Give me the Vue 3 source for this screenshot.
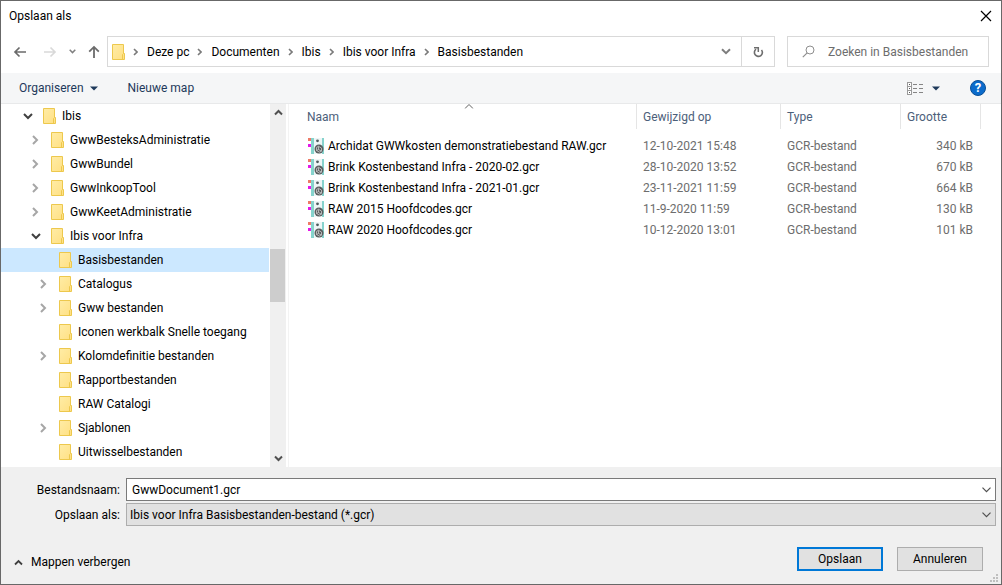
<script setup>
import { ref } from 'vue'

const crumbs = ['Deze pc', 'Documenten', 'Ibis', 'Ibis voor Infra', 'Basisbestanden']

const folders = [
  { name: 'Ibis', level: 0, state: 'open' },
  { name: 'GwwBesteksAdministratie', level: 1, state: 'closed' },
  { name: 'GwwBundel', level: 1, state: 'closed' },
  { name: 'GwwInkoopTool', level: 1, state: 'closed' },
  { name: 'GwwKeetAdministratie', level: 1, state: 'closed' },
  { name: 'Ibis voor Infra', level: 1, state: 'open' },
  { name: 'Basisbestanden', level: 2, state: 'leaf' },
  { name: 'Catalogus', level: 2, state: 'closed' },
  { name: 'Gww bestanden', level: 2, state: 'closed' },
  { name: 'Iconen werkbalk Snelle toegang', level: 2, state: 'leaf' },
  { name: 'Kolomdefinitie bestanden', level: 2, state: 'closed' },
  { name: 'Rapportbestanden', level: 2, state: 'leaf' },
  { name: 'RAW Catalogi', level: 2, state: 'leaf' },
  { name: 'Sjablonen', level: 2, state: 'closed' },
  { name: 'Uitwisselbestanden', level: 2, state: 'leaf' }
]
const selected = ref('Basisbestanden')

const files = [
  { name: 'Archidat GWWkosten demonstratiebestand RAW.gcr', date: '12-10-2021 15:48', size: '340 kB' },
  { name: 'Brink Kostenbestand Infra - 2020-02.gcr', date: '28-10-2020 13:52', size: '670 kB' },
  { name: 'Brink Kostenbestand Infra - 2021-01.gcr', date: '23-11-2021 11:59', size: '664 kB' },
  { name: 'RAW 2015 Hoofdcodes.gcr', date: '11-9-2020 11:59', size: '130 kB' },
  { name: 'RAW 2020 Hoofdcodes.gcr', date: '10-12-2020 13:01', size: '101 kB' }
]

const fileName = ref('GwwDocument1.gcr')
const search = ref('')
</script>

<template>
  <main class="dialog">
    <svg class="defs" width="0" height="0" aria-hidden="true">
      <linearGradient id="folder-fill" x1="0" y1="0" x2="1" y2="1">
        <stop offset="0" stop-color="#ffeca6" />
        <stop offset="1" stop-color="#ffe083" />
      </linearGradient>
      <symbol id="folder" viewBox="0 0 13 16">
        <path d="M.5 .5h11v9h1v6h-12z" fill="url(#folder-fill)" stroke="#edc84d" />
        <path d="M10.500 15.500v-5l1-1" fill="none" stroke="#edc84d" />
      </symbol>
    </svg>

    <header class="titlebar">
      <h1>Opslaan als</h1>
      <button class="close" aria-label="Sluiten">
        <svg width="12" height="12" viewBox="0 0 12 12"><path d="M1 1l10 10M11 1L1 11" stroke="#000" stroke-width="1.200" /></svg>
      </button>
    </header>

    <nav class="navbar" aria-label="Navigatie">
      <div class="history">
        <button aria-label="Vorige"><svg width="14" height="12" viewBox="0 0 14 12"><path d="M13 6H2M6.500 1.500L2 6l4.500 4.500" fill="none" stroke="#6b6b6b" stroke-width="1.700" /></svg></button>
        <button aria-label="Volgende"><svg width="14" height="12" viewBox="0 0 14 12"><path d="M1 6h11M7.500 1.500L12 6l-4.500 4.500" fill="none" stroke="#d9d9d9" stroke-width="1.700" /></svg></button>
        <button class="recent" aria-label="Recente locaties"><svg width="7" height="5" viewBox="0 0 7 5"><path d="M.7 .8l2.800 2.800L6.300 .8" fill="none" stroke="#808080" stroke-width="1.500" /></svg></button>
        <button class="up" aria-label="Omhoog"><svg width="12" height="14" viewBox="0 0 12 14"><path d="M6 13V2M1.200 6.700L6 1.900l4.800 4.800" fill="none" stroke="#6b6b6b" stroke-width="1.800" /></svg></button>
      </div>
      <div class="address">
        <svg class="folder" width="13" height="16"><use href="#folder" /></svg>
        <template v-for="crumb in crumbs" :key="crumb">
          <svg class="sep" width="5" height="8" viewBox="0 0 5 8"><path d="M1 1l3 3-3 3" fill="none" stroke="#7a7a7a" stroke-width="1.600" /></svg>
          <button class="crumb">{{ crumb }}</button>
        </template>
        <button class="history-drop" aria-label="Vorige locaties"><svg width="10" height="7" viewBox="0 0 10 7"><path d="M1 1.200l4 4 4-4" fill="none" stroke="#7d7d7d" stroke-width="2" /></svg></button>
        <button class="refresh" aria-label="Vernieuwen">
          <svg width="11" height="12" viewBox="0 0 11 12"><path d="M3 3.200A4 4 0 1 0 8.500 3.900" fill="none" stroke="#6e6e6e" stroke-width="1.600" /><path d="M1 1.700h4.300V6" fill="none" stroke="#6e6e6e" stroke-width="1.500" /></svg>
        </button>
      </div>
      <label class="search">
        <svg width="13" height="13" viewBox="0 0 13 13"><circle cx="8" cy="5" r="4" fill="none" stroke="#8e8e8e" /><path d="M5.200 7.800L.8 12.200" stroke="#8e8e8e" stroke-width="1.200" /></svg>
        <input v-model="search" type="text" placeholder="Zoeken in Basisbestanden" aria-label="Zoeken in Basisbestanden">
      </label>
    </nav>

    <div class="toolbar">
      <button>Organiseren <svg width="8" height="5" viewBox="0 0 8 5"><path d="M0 .5h8L4 4.500z" fill="#1e395b" /></svg></button>
      <button class="new">Nieuwe map</button>
      <button class="view" aria-label="Weergave wijzigen">
        <svg width="16" height="13" viewBox="0 0 16 13" shape-rendering="crispEdges">
          <path d="M.5 .5h4v12h-4zM.5 4.500h4M.5 8.500h4" fill="#fff" stroke="#9a9a9a" />
          <path d="M2 2h1v1H2zM2 6h1v1H2zM2 10h1v1H2z" fill="#555" />
          <path d="M6 2.500h4M12 2.500h4M6 6.500h4M12 6.500h4M6 10.500h4M12 10.500h4" stroke="#858585" />
        </svg>
        <svg width="8" height="5" viewBox="0 0 8 5"><path d="M0 .5h8L4 4.500z" fill="#1e395b" /></svg>
      </button>
      <button class="help" aria-label="Help">?</button>
    </div>

    <section class="browser">
      <ul class="tree" aria-label="Mappen">
        <li v-for="folder in folders" :key="folder.name">
          <button :class="['node', 'level-' + folder.level, { selected: folder.name === selected }]" @click="selected = folder.name">
            <span class="twisty">
              <svg v-if="folder.state === 'open'" width="10" height="7" viewBox="0 0 10 7"><path d="M1 1l4 4 4-4" fill="none" stroke="#404040" stroke-width="2" /></svg>
              <svg v-else-if="folder.state === 'closed'" width="7" height="10" viewBox="0 0 7 10"><path d="M1 1l4 4-4 4" fill="none" stroke="#a6a6a6" stroke-width="2" /></svg>
            </span>
            <svg class="folder" width="13" height="16"><use href="#folder" /></svg>
            <span>{{ folder.name }}</span>
          </button>
        </li>
      </ul>
      <div class="scrollbar">
        <button aria-label="Omhoog schuiven"><svg width="9" height="7" viewBox="0 0 9 7"><path d="M1 5.500L4.500 2 8 5.500" fill="none" stroke="#505050" stroke-width="2" /></svg></button>
        <div class="track"><div class="thumb"></div></div>
        <button aria-label="Omlaag schuiven"><svg width="9" height="7" viewBox="0 0 9 7"><path d="M1 1.500L4.500 5 8 1.500" fill="none" stroke="#505050" stroke-width="2" /></svg></button>
      </div>
      <div class="files">
        <table>
          <colgroup><col><col class="c-date"><col class="c-type"><col class="c-size"></colgroup>
          <thead>
            <tr>
              <th scope="col" aria-sort="ascending">Naam<svg class="sort" width="9" height="5" viewBox="0 0 9 5"><path d="M.5 4.500l4-4 4 4" fill="none" stroke="#606060" /></svg></th>
              <th scope="col">Gewijzigd op</th>
              <th scope="col">Type</th>
              <th scope="col">Grootte</th>
            </tr>
          </thead>
          <tbody>
            <tr v-for="file in files" :key="file.name">
              <td>
                <div class="file">
                  <svg width="16" height="16" viewBox="0 0 16 16">
                    <path d="M3 0h3v16H3zM14 0h2v16h-2z" fill="#86d3cd" />
                    <path d="M6 0h8v16H6z" fill="#eef6f6" />
                    <path d="M0 0h3v3H0z" fill="#ee7b68" />
                    <path d="M0 6h3v3H0z" fill="#e516e8" />
                    <circle cx="9.500" cy="2.800" r="1.400" fill="#4c5a5c" />
                    <circle cx="11" cy="11" r="4.500" fill="#5a5d5e" />
                    <path d="M8.500 9.500l2-1.200 3 1.800v3l-2 1-3-1.600zM10.500 8.500v3l3 1.600M8.500 12.500l2-1" fill="none" stroke="#c9cccc" stroke-width=".8" />
                  </svg>
                  <span>{{ file.name }}</span>
                </div>
              </td>
              <td>{{ file.date }}</td>
              <td>GCR-bestand</td>
              <td class="size">{{ file.size }}</td>
            </tr>
          </tbody>
        </table>
      </div>
    </section>

    <form class="footer" @submit.prevent>
      <div class="fields">
        <label for="name">Bestandsnaam:</label>
        <div class="combo editable">
          <input id="name" v-model="fileName" type="text">
          <svg class="drop" width="9" height="6" viewBox="0 0 9 6"><path d="M.5 .7l4 4 4-4" fill="none" stroke="#505050" stroke-width="1.200" /></svg>
        </div>
        <label for="type">Opslaan als:</label>
        <div class="combo">
          <select id="type">
            <option>Ibis voor Infra Basisbestanden-bestand (*.gcr)</option>
          </select>
          <svg class="drop" width="9" height="6" viewBox="0 0 9 6"><path d="M.5 .7l4 4 4-4" fill="none" stroke="#505050" stroke-width="1.200" /></svg>
        </div>
      </div>
      <div class="actions">
        <button type="button" class="toggle">
          <svg width="9" height="7" viewBox="0 0 9 7"><path d="M1 5.500L4.500 2 8 5.500" fill="none" stroke="#404040" stroke-width="1.800" /></svg>
          Mappen verbergen
        </button>
        <button type="submit" class="push primary">Opslaan</button>
        <button type="button" class="push">Annuleren</button>
      </div>
      <svg class="grip" width="8" height="8" viewBox="0 0 8 8" shape-rendering="crispEdges"><path d="M6 0h2v2H6zM3 3h2v2H3zM6 3h2v2H6zM0 6h2v2H0zM3 6h2v2H3zM6 6h2v2H6z" fill="#bfbfbf" /></svg>
    </form>
  </main>
</template>

<style>
body {
  margin: 0;
}
</style>

<style scoped>
.dialog {
  box-sizing: border-box;
  display: flex;
  flex-direction: column;
  min-height: 100vh;
  border: 1px solid #686868;
  background: #fff;
  color: #000;
  font: 12px/16px Roboto, "Open Sans", sans-serif;
}
.defs {
  position: absolute;
}
svg {
  display: block;
  flex: none;
}
button,
input,
select {
  margin: 0;
  padding: 0;
  border: 0;
  background: none;
  color: inherit;
  font: inherit;
}
button {
  display: flex;
  align-items: center;
  white-space: nowrap;
}
.titlebar {
  display: flex;
  align-items: center;
  justify-content: space-between;
  height: 29px;
  padding: 0 9px 0 8px;
}
h1 {
  margin: 0;
  font-size: 12px;
  font-weight: 400;
}
.navbar {
  display: flex;
  gap: 12px;
  padding: 6px 12px;
}
.history {
  display: flex;
  align-items: center;
  width: 82px;
}
.history button + button {
  margin-left: 16px;
}
.history .recent.recent {
  margin-left: 12px;
}
.history .up.up {
  margin-left: 12px;
}
.address {
  box-sizing: border-box;
  display: flex;
  flex: 1;
  align-items: center;
  height: 31px;
  padding-left: 4px;
  border: 1px solid #d9d9d9;
}
.sep {
  margin: 0 9px 0 8px;
}
.history-drop {
  margin: 0 10px 0 auto;
}
.refresh {
  justify-content: center;
  align-self: stretch;
  width: 33px;
  border-left: 1px solid #d9d9d9;
}
.search {
  box-sizing: border-box;
  display: flex;
  align-items: center;
  gap: 13px;
  width: 202px;
  padding: 0 14px;
  border: 1px solid #d9d9d9;
}
.search input {
  flex: 1;
  min-width: 0;
}
.search input::placeholder {
  color: #6d6d6d;
  opacity: 1;
}
.toolbar {
  display: flex;
  align-items: center;
  height: 30px;
  padding: 0 15px 0 18px;
  border-bottom: 1px solid #e8e9ea;
  background: #f5f6f7;
  color: #1e395b;
}
.toolbar button {
  gap: 6px;
}
.toolbar .new {
  margin-left: 30px;
}
.toolbar .view {
  gap: 9px;
  margin: 0 30px 0 auto;
}
.toolbar .help {
  justify-content: center;
  width: 16px;
  height: 16px;
  border: 1px solid #0a4f96;
  border-radius: 50%;
  background: #0b6bcb;
  color: #fff;
  font-size: 13px;
  font-weight: 700;
}
.browser {
  display: flex;
  flex: 1;
}
.tree {
  width: 268px;
  margin: 0;
  padding: 0 0 3px;
  list-style: none;
}
.node {
  width: 100%;
  height: 24px;
}
.level-0 {
  padding-left: 21px;
}
.level-1 {
  padding-left: 29px;
}
.level-2 {
  padding-left: 37px;
}
.selected {
  background: #cce8ff;
}
.twisty {
  display: flex;
  justify-content: center;
  width: 11px;
  margin-right: 10px;
}
.node .folder {
  margin-right: 6px;
}
.scrollbar {
  display: flex;
  flex-direction: column;
  width: 16px;
  margin: 0 2px 0 1px;
  background: #f0f0f0;
}
.scrollbar button {
  justify-content: center;
  height: 17px;
}
.track {
  display: flex;
  flex: 1;
  flex-direction: column;
}
.thumb {
  width: 15px;
  height: 16%;
  margin-top: 128px;
  background: #cdcdcd;
}
.files {
  flex: 1;
  padding: 0 20px 0 12px;
  border-left: 1px solid #f3f3f3;
}
table {
  width: 100%;
  table-layout: fixed;
  border-collapse: separate;
  border-spacing: 0;
}
.c-date {
  width: 144px;
}
.c-type {
  width: 120px;
}
.c-size {
  width: 80px;
}
th {
  position: relative;
  box-sizing: border-box;
  height: 25px;
  padding: 0 6px;
  border-right: 1px solid #e5e5e5;
  color: #4c607a;
  font-weight: 400;
  text-align: left;
}
.sort {
  position: absolute;
  top: 0;
  left: 50%;
  transform: translateX(-50%);
}
tbody::before {
  display: block;
  height: 6px;
  content: "";
}
td {
  height: 21px;
  padding: 0 6px;
  color: #6d6d6d;
  white-space: nowrap;
}
.file {
  display: flex;
  align-items: center;
  gap: 4px;
  padding-left: 1px;
  color: #000;
}
.size {
  padding-right: 8px;
  text-align: right;
}
.footer {
  position: relative;
  padding: 11px 5px 13px 0;
  background: #f0f0f0;
}
.fields {
  display: grid;
  grid-template-columns: 119px 1fr;
  gap: 2px 6px;
  align-items: center;
}
.fields label {
  text-align: right;
}
.combo {
  box-sizing: border-box;
  display: grid;
  align-items: center;
  height: 23px;
  border: 1px solid #adadad;
  background: #e1e1e1;
}
.combo > * {
  grid-area: 1 / 1;
}
.editable {
  border-color: #7a7a7a;
  background: #fff;
}
.combo input {
  padding: 0 20px 0 5px;
}
.combo select {
  padding: 0 20px 0 3px;
  appearance: none;
}
.drop {
  justify-self: end;
  margin-right: 4px;
  pointer-events: none;
}
.actions {
  display: flex;
  align-items: center;
  gap: 14px;
  padding: 21px 13px 0;
}
.toggle {
  gap: 8px;
  margin: 6px auto 0 0;
}
.push {
  box-sizing: border-box;
  justify-content: center;
  width: 86px;
  height: 24px;
  border: 1px solid #adadad;
  background: #e1e1e1;
}
.primary {
  border: 2px solid #0078d7;
}
.grip {
  position: absolute;
  right: 3px;
  bottom: 2px;
}
</style>
